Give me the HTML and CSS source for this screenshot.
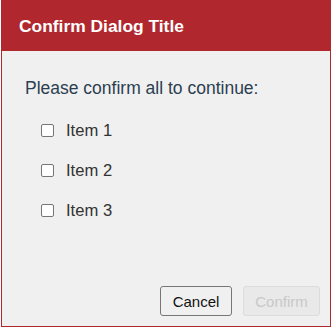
FILE: index.html
```html
<!DOCTYPE html>
<html>
<head>
<meta charset="utf-8">
<link rel="stylesheet" href="styles.css">
</head>
<body>
<div class="dialog">
  <div class="dialog-header">Confirm Dialog Title</div>
  <div class="dialog-body">
    <p class="prompt">Please confirm all to continue:</p>
    <ul class="items">
      <li class="item"><span class="box"></span><span class="label">Item 1</span></li>
      <li class="item"><span class="box"></span><span class="label">Item 2</span></li>
      <li class="item"><span class="box"></span><span class="label">Item 3</span></li>
    </ul>
  </div>
  <div class="dialog-footer">
    <button class="btn btn-cancel">Cancel</button>
    <button class="btn btn-confirm" disabled>Confirm</button>
  </div>
</div>
</body>
</html>
```
FILE: styles.css
```css
html, body {
  margin: 0;
  padding: 0;
  background: #ffffff;
}
body {
  font-family: "Liberation Sans", Arial, sans-serif;
}
.dialog {
  margin-left: 1px;
  width: 330px;
  height: 327px;
  box-sizing: border-box;
  border: 1px solid #b0282e;
  border-top: none;
  background: #f0f0f0;
  display: flex;
  flex-direction: column;
}
.dialog-header {
  background: #b0282e;
  color: #ffffff;
  font-weight: bold;
  font-size: 17.4px;
  height: 51px;
  box-sizing: border-box;
  padding: 16px 0 0 18px;
  margin: 0 -1px;
}
.dialog-body {
  flex: 1;
  padding: 0 0 0 23px;
  color: #2c3e50;
}
.prompt {
  margin: 27px 0 0 0;
  font-size: 17.5px;
  line-height: 20px;
}
.items {
  list-style: none;
  margin: 13px 0 0 0;
  padding: 0 0 0 16px;
}
.item {
  display: flex;
  align-items: center;
  height: 40px;
  font-size: 16.6px;
  color: #333333;
}
.box {
  width: 13px;
  height: 13px;
  box-sizing: border-box;
  border: 1px solid #767676;
  border-radius: 2px;
  background: #ffffff;
  margin-right: 12px;
  margin-top: -1px;
}
.label {
  line-height: 20px;
}
.dialog-footer {
  display: flex;
  justify-content: flex-end;
  gap: 11px;
  padding: 0 10px 10px 0;
}
.btn {
  height: 30px;
  box-sizing: border-box;
  font-family: "Liberation Sans", Arial, sans-serif;
  font-size: 15px;
  border-radius: 3px;
  padding: 0;
}
.btn-cancel {
  width: 72px;
  background: #f0f0f0;
  border: 1px solid #767676;
  color: #111111;
}
.btn-confirm {
  width: 77px;
  background: #e9e9e9;
  border: 1px solid #dcdcdc;
  color: #c8c8c8;
}
```
